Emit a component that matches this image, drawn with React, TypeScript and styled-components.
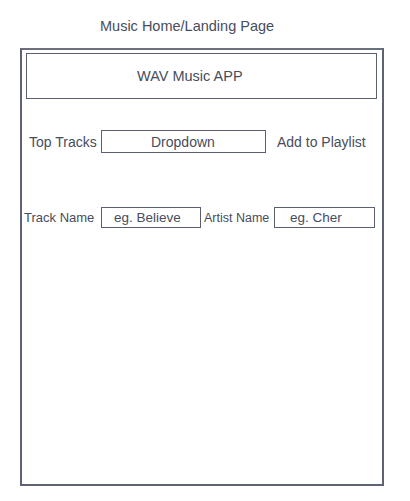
import React from "react";
import styled, { createGlobalStyle } from "styled-components";

const Global = createGlobalStyle`
  html, body { margin: 0; padding: 0; background: #ffffff; }
  body { font-family: "Liberation Sans", Arial, sans-serif; color: #474d5b; }
`;

const Page = styled.div`
  width: 410px;
  height: 501px;
  position: relative;
  overflow: hidden;
`;

const Title = styled.div`
  height: 48px;
  box-sizing: border-box;
  padding: 17px 0 0 100px;
  font-size: 14.5px;
  line-height: 18px;
  white-space: nowrap;
`;

const Frame = styled.div`
  margin-left: 20px;
  width: 364px;
  height: 438px;
  box-sizing: border-box;
  border: 2px solid #5d6372;
  border-top-color: #6a707e;
  padding: 3px 5px 0 4px;
`;

const Header = styled.div`
  height: 46px;
  box-sizing: border-box;
  border: 1.5px solid #5a606f;
  display: flex;
  align-items: center;
  padding-left: 110px;
  font-size: 14.5px;
  white-space: nowrap;
`;

const Row = styled.div<{ $top: number; $h: number }>`
  display: flex;
  align-items: center;
  height: ${(p) => p.$h}px;
  margin-top: ${(p) => p.$top}px;
  white-space: nowrap;
`;

const Label = styled.div<{ $w: number; $ml?: number; $size?: number }>`
  width: ${(p) => p.$w}px;
  margin-left: ${(p) => p.$ml ?? 0}px;
  box-sizing: border-box;
  font-size: ${(p) => p.$size ?? 14}px;
  flex: none;
`;

const Field = styled.div<{ $w: number; $pl: number; $size?: number }>`
  width: ${(p) => p.$w}px;
  height: 100%;
  box-sizing: border-box;
  border: 1.5px solid #5a606f;
  display: flex;
  align-items: center;
  padding-left: ${(p) => p.$pl}px;
  font-size: ${(p) => p.$size ?? 14}px;
  flex: none;
`;

export default function App() {
  return (
    <Page>
      <Global />
      <Title>Music Home/Landing Page</Title>
      <Frame>
        <Header>WAV Music APP</Header>
        <Row $top={31} $h={23}>
          <Label $w={72} $ml={3}>Top Tracks</Label>
          <Field $w={165} $pl={49}>Dropdown</Field>
          <Label $w={100} $ml={11}>Add to Playlist</Label>
        </Row>
        <Row $top={54} $h={21}>
          <Label $w={77} $ml={-2} $size={13}>Track Name</Label>
          <Field $w={100} $pl={12} $size={13.5}>eg. Believe</Field>
          <Label $w={70} $ml={3} $size={12.5}>Artist Name</Label>
          <Field $w={101} $pl={15} $size={13.5}>eg. Cher</Field>
        </Row>
      </Frame>
    </Page>
  );
}
